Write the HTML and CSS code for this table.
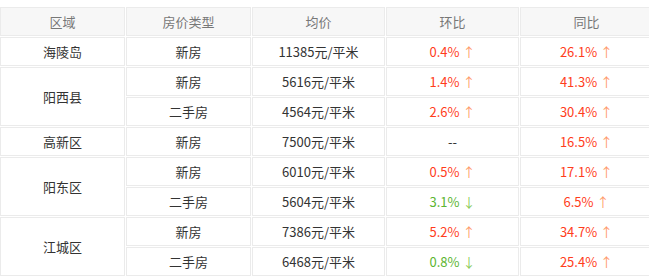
FILE: index.html
```html
<!DOCTYPE html>
<html>
    <head>
        <meta charset="utf-8">
        <title>房价</title>
        <link rel="stylesheet" href="styles.css">
    </head>
    <body>
        <table class="price-table">
            <colgroup>
                <col class="c-area">
                <col class="c-type">
                <col class="c-avg">
                <col class="c-mom">
                <col class="c-yoy">
            </colgroup>
            <thead>
                <tr>
                    <th>区域</th>
                    <th>房价类型</th>
                    <th>均价</th>
                    <th>环比</th>
                    <th>同比</th>
                </tr>
            </thead>
            <tbody>
                <tr>
                    <td>海陵岛</td>
                    <td>新房</td>
                    <td>11385元/平米</td>
                    <td class="up">0.4%<span class="arrow">↑</span></td>
                    <td class="up">26.1%<span class="arrow">↑</span></td>
                </tr>
                <tr>
                    <td rowspan="2">阳西县</td>
                    <td>新房</td>
                    <td>5616元/平米</td>
                    <td class="up">1.4%<span class="arrow">↑</span></td>
                    <td class="up">41.3%<span class="arrow">↑</span></td>
                </tr>
                <tr>
                    <td>二手房</td>
                    <td>4564元/平米</td>
                    <td class="up">2.6%<span class="arrow">↑</span></td>
                    <td class="up">30.4%<span class="arrow">↑</span></td>
                </tr>
                <tr>
                    <td>高新区</td>
                    <td>新房</td>
                    <td>7500元/平米</td>
                    <td>--</td>
                    <td class="up">16.5%<span class="arrow">↑</span></td>
                </tr>
                <tr>
                    <td rowspan="2">阳东区</td>
                    <td>新房</td>
                    <td>6010元/平米</td>
                    <td class="up">0.5%<span class="arrow">↑</span></td>
                    <td class="up">17.1%<span class="arrow">↑</span></td>
                </tr>
                <tr>
                    <td>二手房</td>
                    <td>5604元/平米</td>
                    <td class="down">3.1%<span class="arrow">↓</span></td>
                    <td class="up">6.5%<span class="arrow">↑</span></td>
                </tr>
                <tr>
                    <td rowspan="2">江城区</td>
                    <td>新房</td>
                    <td>7386元/平米</td>
                    <td class="up">5.2%<span class="arrow">↑</span></td>
                    <td class="up">34.7%<span class="arrow">↑</span></td>
                </tr>
                <tr>
                    <td>二手房</td>
                    <td>6468元/平米</td>
                    <td class="down">0.8%<span class="arrow">↓</span></td>
                    <td class="up">25.4%<span class="arrow">↑</span></td>
                </tr>
            </tbody>
        </table>
    </body>
</html>
```

FILE: styles.css
```css
body {
    margin: 0;
    padding-top: 6px;
    background: #fff;
    font-family: "Noto Sans CJK SC", "Noto Sans", sans-serif;
    font-size: 13px;
    color: #333;
}
.price-table {
    width: 651px;
    margin-left: -1px;
    table-layout: fixed;
    border-collapse: separate;
    border-spacing: 1px;
}
.c-area {
    width: 125px;
}
.c-type {
    width: 125px;
}
.c-avg,
.c-mom,
.c-yoy {
    width: 133px;
}
.price-table th,
.price-table td {
    border: 1px solid #ebebeb;
    padding: 0;
    text-align: center;
    line-height: 18px;
}
.price-table th {
    height: 27px;
    background: #f7f7f7;
    color: #777;
    font-weight: normal;
}
.price-table td {
    height: 27px;
}
.up {
    color: #ff3d1c;
}
.down {
    color: #5cb531;
}
.arrow {
    margin-left: 3px;
}
.up .arrow {
    color: #ff9a6a;
}
.down .arrow {
    color: #8ccc5a;
}
```
